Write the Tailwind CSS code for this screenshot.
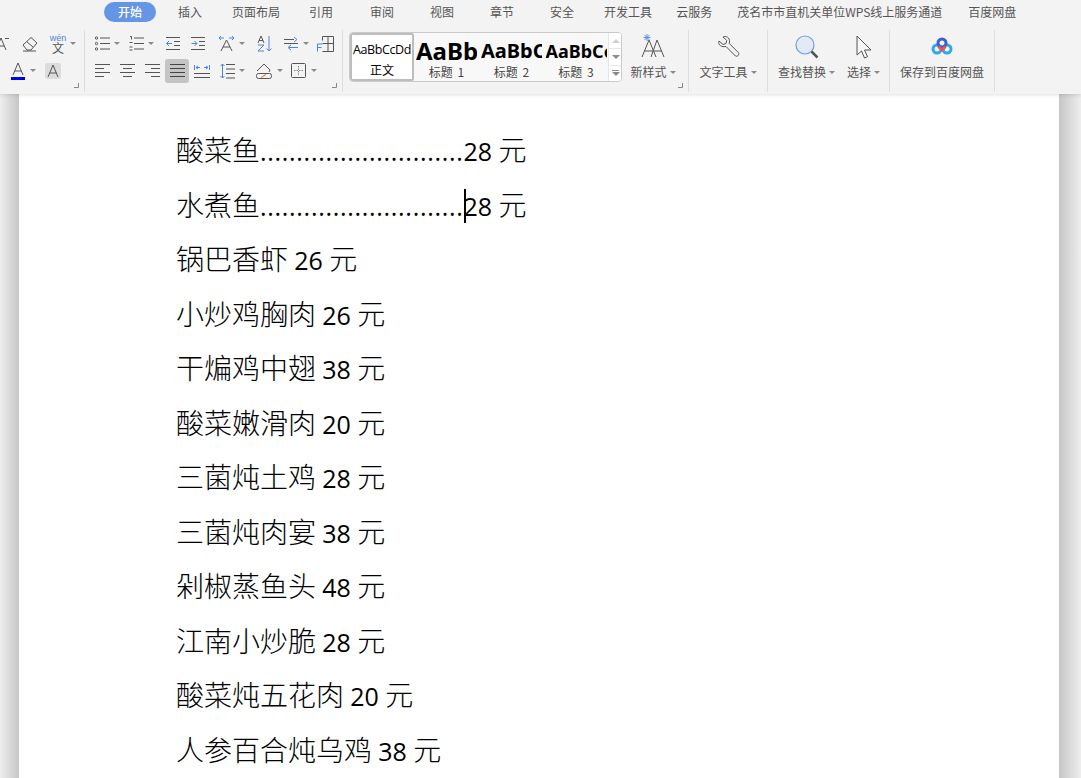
<!DOCTYPE html>
<html lang="zh-CN">
<head>
<meta charset="UTF-8">
<title>WPS 文字</title>
<script src="https://cdn.jsdelivr.net/npm/@tailwindcss/browser@4"></script>
</head>
<body class="h-screen overflow-hidden bg-white font-['Noto_Sans_CJK_SC','Noto_Sans',sans-serif]">
<div class="flex flex-col h-[778px]">

  <!-- ribbon -->
  <header class="relative z-10 h-[94px] shrink-0 bg-[#f3f3f3] shadow-[0_1px_4px_rgba(0,0,0,0.12)] overflow-hidden">
    <nav class="flex items-center h-[22px] pt-[1px] pl-[104px] text-[12px] text-[#555] whitespace-nowrap">
      <span class="w-[52px] h-[20px] leading-[20px] rounded-full bg-[#6495e6] text-white text-center font-medium">开始</span>
      <span class="ml-[22px]">插入</span>
      <span class="ml-[30px]">页面布局</span>
      <span class="ml-[29px]">引用</span>
      <span class="ml-[37px]">审阅</span>
      <span class="ml-[36px]">视图</span>
      <span class="ml-[36px]">章节</span>
      <span class="ml-[36px]">安全</span>
      <span class="ml-[30px]">开发工具</span>
      <span class="ml-[24px]">云服务</span>
      <span class="ml-[25px]">茂名市市直机关单位WPS线上服务通道</span>
      <span class="ml-[26px]">百度网盘</span>
    </nav>

    <div class="flex h-[62px] mt-[8px] text-[#555]">
      <!-- font group -->
      <section class="relative w-[85px] border-r border-[#dedede] overflow-hidden">
        <div class="flex items-center h-[27px]">
          <svg class="w-[12px] h-[16px] -ml-[3px]" viewBox="0 0 12 16" fill="none" stroke="#555"><path d="M-1 14 4 2l5 12M1 10h6M8 2.500h4"/></svg>
          <svg class="w-[16px] h-[16px] ml-[13px]" viewBox="0 0 16 16" fill="none" stroke="#555"><path d="M1 9 9 1.500 15 7l-6 7H5ZM4.500 5.500 11 11M1 15h13"/></svg>
          <span class="ml-[12px] w-[16px] flex flex-col items-center leading-none">
            <span class="text-[9px] leading-[9px] text-[#4a86d8] font-['Liberation_Sans',sans-serif]">wén</span>
            <span class="text-[12px] leading-[10px] text-[#555]">文</span>
          </span>
          <i class="ml-[4px] border-x-[3px] border-t-[3px] border-x-transparent border-t-[#8a8a8a]"></i>
        </div>
        <div class="flex items-center h-[27px]">
          <svg class="w-[14px] h-[18px] ml-[11px]" viewBox="0 0 14 18" fill="none"><path d="M2 13 7 1l5 12M3.500 9h7" stroke="#555"/><rect y="15" width="14" height="3" fill="#0000e6"/></svg>
          <i class="ml-[5px] border-x-[3px] border-t-[3px] border-x-transparent border-t-[#8a8a8a]"></i>
          <span class="ml-[9px] w-[16px] h-[16px] rounded-[2px] bg-[#dcdcdc] flex items-center justify-center">
            <svg class="w-[12px] h-[14px]" viewBox="0 0 12 14" fill="none" stroke="#555"><path d="M1 13 6 1l5 12M2.500 9h7"/></svg>
          </span>
        </div>
        <svg class="absolute right-[5px] bottom-[4px] w-[5px] h-[5px]" viewBox="0 0 5 5" fill="none" stroke="#888"><path d="M4.500 0v4.500H0"/></svg>
      </section>

      <!-- paragraph group -->
      <section class="relative w-[258px] border-r border-[#dedede]">
        <div class="flex items-center h-[27px] pl-[10px]">
          <svg class="w-[15px] h-[15px]" viewBox="0 0 15 15" fill="none" stroke="#555"><circle cx="1.500" cy="2" r="1.200"/><circle cx="1.500" cy="7.500" r="1.200"/><circle cx="1.500" cy="13" r="1.200"/><path d="M5 2h10M5 7.500h10M5 13h10"/></svg>
          <i class="ml-[4px] border-x-[3px] border-t-[3px] border-x-transparent border-t-[#8a8a8a]"></i>
          <svg class="ml-[9px] w-[15px] h-[15px]" viewBox="0 0 15 15" fill="none" stroke="#555"><path d="M1 .500h1.500v3M.500 6.500h3M.500 11h3M.500 14h3M5 2h10M5 7.500h10M5 13h10"/></svg>
          <i class="ml-[4px] border-x-[3px] border-t-[3px] border-x-transparent border-t-[#8a8a8a]"></i>
          <svg class="ml-[12px] w-[15px] h-[13px]" viewBox="0 0 15 13" fill="none"><path d="M0 .500h14M8 4.500h6M8 8.500h6M0 12.500h14" stroke="#555"/><path d="M6 6.500H.500M3 4 .500 6.500 3 9" stroke="#4a86d8"/></svg>
          <svg class="ml-[10px] w-[15px] h-[13px]" viewBox="0 0 15 13" fill="none"><path d="M0 .500h14M8 4.500h6M8 8.500h6M0 12.500h14" stroke="#555"/><path d="M.500 6.500H6M3.500 4 6 6.500 3.500 9" stroke="#4a86d8"/></svg>
          <svg class="ml-[12px] w-[17px] h-[17px]" viewBox="0 0 17 17" fill="none"><path d="M3 16 8.500 5 14 16M5 12h7" stroke="#555"/><path d="M1 3h5M3 1 1 3l2 2M16 3h-5M14 1l2 2-2 2" stroke="#4a86d8"/></svg>
          <i class="ml-[4px] border-x-[3px] border-t-[3px] border-x-transparent border-t-[#8a8a8a]"></i>
          <svg class="ml-[12px] w-[15px] h-[17px]" viewBox="0 0 15 17" fill="none"><path d="M1 8 4 1l3 7M2 5.500h4" stroke="#555"/><path d="M1 10h6l-6 6h6" stroke="#4a86d8"/><path d="M12 1v15M9.500 13.500 12 16l2.500-2.500" stroke="#4a86d8"/></svg>
          <svg class="ml-[12px] w-[15px] h-[15px]" viewBox="0 0 15 15" fill="none"><path d="M0 3.500h10M0 7.500h14M9 11.500h5" stroke="#555"/><path d="M10 1l3 2.500L10 6M14 11.500H5M7 9l-3 2.500L7 14" stroke="#4a86d8"/></svg>
          <i class="ml-[4px] border-x-[3px] border-t-[3px] border-x-transparent border-t-[#8a8a8a]"></i>
          <svg class="ml-[8px] w-[17px] h-[16px]" viewBox="0 0 17 16" fill="none"><path d="M5.500.500h11v15h-11M5.500.500v4M11 .500v15M5.500 7.500h11" stroke="#555"/><path d="M.500 8h5M.500 8v7.500M.500 11.500h4" stroke="#4a86d8"/></svg>
        </div>
        <div class="flex items-center h-[27px] pl-[10px]">
          <svg class="w-[15px] h-[13px]" viewBox="0 0 15 13" fill="none" stroke="#555"><path d="M0 .500h15M0 4.500h9M0 8.500h15M0 12.500h9"/></svg>
          <svg class="ml-[10px] w-[15px] h-[13px]" viewBox="0 0 15 13" fill="none" stroke="#555"><path d="M0 .500h15M3 4.500h9M0 8.500h15M3 12.500h9"/></svg>
          <svg class="ml-[10px] w-[15px] h-[13px]" viewBox="0 0 15 13" fill="none" stroke="#555"><path d="M0 .500h15M6 4.500h9M0 8.500h15M6 12.500h9"/></svg>
          <span class="ml-[5px] w-[24px] h-[24px] rounded-[3px] bg-[#c4c4c4] flex items-center justify-center">
            <svg class="w-[15px] h-[13px]" viewBox="0 0 15 13" fill="none" stroke="#444"><path d="M0 .500h15M0 4.500h15M0 8.500h15M0 12.500h15"/></svg>
          </span>
          <svg class="ml-[5px] w-[16px] h-[14px]" viewBox="0 0 16 14" fill="none"><path d="M0 9.500h16M0 13.500h16" stroke="#555"/><path d="M.500 1v5M15.500 1v5M2 3.500h4M4 2 2 3.500 4 5M10 3.500h4M12 2l2 1.500L12 5" stroke="#4a86d8"/></svg>
          <svg class="ml-[10px] w-[15px] h-[16px]" viewBox="0 0 15 16" fill="none"><path d="M6 1.500h9M6 6h9M6 10.500h9M6 15h9" stroke="#555"/><path d="M2.500 1v14M.500 3l2-2 2 2M.500 13l2 2 2-2" stroke="#4a86d8"/></svg>
          <i class="ml-[4px] border-x-[3px] border-t-[3px] border-x-transparent border-t-[#8a8a8a]"></i>
          <svg class="ml-[11px] w-[16px] h-[16px]" viewBox="0 0 16 16" fill="none"><path d="M1 8 8 1l6 6-1 2" stroke="#555"/><rect x=".500" y="10.500" width="15" height="5" rx="2" stroke="#555"/><path d="M5 14.500 10 11.500" stroke="#e05a4a"/></svg>
          <i class="ml-[5px] border-x-[3px] border-t-[3px] border-x-transparent border-t-[#8a8a8a]"></i>
          <svg class="ml-[8px] w-[15px] h-[15px]" viewBox="0 0 15 15" fill="none"><rect x=".500" y=".500" width="14" height="14" rx="1" stroke="#555"/><path d="M7.500 3v9M3 7.500h9" stroke="#888" stroke-dasharray="1.500 1"/></svg>
          <i class="ml-[5px] border-x-[3px] border-t-[3px] border-x-transparent border-t-[#8a8a8a]"></i>
        </div>
        <svg class="absolute right-[5px] bottom-[4px] w-[5px] h-[5px]" viewBox="0 0 5 5" fill="none" stroke="#888"><path d="M4.500 0v4.500H0"/></svg>
      </section>

      <!-- style gallery -->
      <section class="relative flex w-[346px] border-r border-[#dedede] pl-[6px]">
        <div class="flex w-[273px] h-[50px] mt-[2px] rounded-[4px] border border-[#cacaca] bg-[#f8f8f8] overflow-hidden">
          <div class="w-[64px] shrink-0 rounded-[2px] border-2 border-[#bdbdbd] bg-white flex flex-col items-center">
            <span class="h-[27px] leading-[29px] text-[12.500px] text-black font-['Open_Sans',sans-serif] tracking-[-0.400px] whitespace-nowrap">AaBbCcDd</span>
            <span class="text-[12px] leading-[16px] text-black">正文</span>
          </div>
          <div class="w-[65px] shrink-0 flex flex-col items-center overflow-hidden">
            <span class="w-[61px] h-[32px] leading-[36px] overflow-hidden text-[24px] font-bold text-black font-['Noto_Sans',sans-serif] whitespace-nowrap">AaBbCc</span>
            <span class="text-[12px] leading-[14px] text-[#444] [word-spacing:2px]">标题 1</span>
          </div>
          <div class="w-[65px] shrink-0 flex flex-col items-center overflow-hidden">
            <span class="w-[61px] h-[32px] leading-[36px] overflow-hidden text-[20px] font-bold text-black font-['Noto_Sans',sans-serif] whitespace-nowrap">AaBbCc</span>
            <span class="text-[12px] leading-[14px] text-[#444] [word-spacing:2px]">标题 2</span>
          </div>
          <div class="w-[64px] shrink-0 flex flex-col items-center overflow-hidden">
            <span class="w-[61px] h-[32px] leading-[36px] overflow-hidden text-[18px] font-bold text-black font-['Noto_Sans',sans-serif] whitespace-nowrap">AaBbCc</span>
            <span class="text-[12px] leading-[14px] text-[#444] [word-spacing:2px]">标题 3</span>
          </div>
          <div class="w-[14px] shrink-0 flex flex-col items-center border-l border-[#e6e6e6] bg-white">
            <span class="flex-1 flex items-center"><i class="border-x-[4px] border-b-[4px] border-x-transparent border-b-[#cfcfcf]"></i></span>
            <span class="flex-1 w-full flex items-center justify-center border-y border-[#e6e6e6]"><i class="border-x-[4px] border-t-[4px] border-x-transparent border-t-[#8a8a8a]"></i></span>
            <span class="flex-1 flex flex-col items-center justify-center gap-[1px]"><i class="w-[7px] border-t border-[#8a8a8a]"></i><i class="border-x-[4px] border-t-[4px] border-x-transparent border-t-[#8a8a8a]"></i></span>
          </div>
        </div>
        <div class="w-[60px] flex flex-col items-center ml-[1px]">
          <svg class="w-[26px] h-[26px] mt-[3px]" viewBox="0 0 26 26" fill="none"><path d="M2 24 9 7l7 17M4.500 18h9M11 24l6-17 7 17M14 18h8" stroke="#555"/><path d="M7 1v7M3.500 4.500h7M4.500 2l5 5M9.500 2l-5 5" stroke="#5b93e0"/></svg>
          <span class="flex items-center text-[12px] leading-[16px] mt-[5px]">新样式<i class="ml-[3px] border-x-[3px] border-t-[3px] border-x-transparent border-t-[#8a8a8a]"></i></span>
        </div>
        <svg class="absolute right-[5px] bottom-[4px] w-[5px] h-[5px]" viewBox="0 0 5 5" fill="none" stroke="#888"><path d="M4.500 0v4.500H0"/></svg>
      </section>

      <!-- text tools -->
      <section class="w-[79px] border-r border-[#dedede] flex flex-col items-center">
        <svg class="w-[24px] h-[24px] mt-[5px]" viewBox="0 0 24 24" fill="none" stroke="#555"><path d="M3 6 7 9.500l3-1 .8-3L7 2c3-1.500 7 .5 6.500 5l-.2 1.500 9 9c1.300 1.300-.2 4.800-2.800 3.500l-9.500-9.500C6 12.500 1.500 10 3 6Z"/></svg>
        <span class="flex items-center text-[12px] leading-[16px] mt-[5px]">文字工具<i class="ml-[3px] border-x-[3px] border-t-[3px] border-x-transparent border-t-[#8a8a8a]"></i></span>
      </section>

      <!-- find and select -->
      <section class="w-[122px] border-r border-[#dedede] flex pl-[10px]">
        <div class="flex flex-col items-center">
          <svg class="w-[24px] h-[24px] mt-[5px]" viewBox="0 0 24 24" fill="none"><circle cx="10" cy="10" r="9" fill="#e3eaf6" stroke="#6f9fe2" stroke-width="1.200"/><path d="m16.500 16.500 6 6" stroke="#555" stroke-width="2.500"/></svg>
          <span class="flex items-center text-[12px] leading-[16px] mt-[5px]">查找替换<i class="ml-[3px] border-x-[3px] border-t-[3px] border-x-transparent border-t-[#8a8a8a]"></i></span>
        </div>
        <div class="flex flex-col items-center ml-[12px]">
          <svg class="w-[18px] h-[24px] mt-[5px]" viewBox="0 0 18 24" fill="#f7f7f7" stroke="#555"><path d="M2 1v19l4.500-4 3 7 3-1.300-3-6.700H16Z"/></svg>
          <span class="flex items-center text-[12px] leading-[16px] mt-[5px]">选择<i class="ml-[3px] border-x-[3px] border-t-[3px] border-x-transparent border-t-[#8a8a8a]"></i></span>
        </div>
      </section>

      <!-- baidu -->
      <section class="w-[105px] border-r border-[#dedede] flex flex-col items-center">
        <svg class="w-[22px] h-[18px] mt-[7px]" viewBox="0 0 22 18" fill="none" stroke-width="3"><circle cx="6" cy="12" r="4" stroke="#2fa8e8"/><circle cx="16" cy="12" r="4" stroke="#2fa8e8"/><circle cx="11" cy="6" r="4" stroke="#3f5fd0"/><path d="M7.500 9.500 11 13l3.500-3.500" stroke="#e8506a"/></svg>
        <span class="text-[12px] leading-[16px] mt-[9px]">保存到百度网盘</span>
      </section>
    </div>
  </header>

  <!-- document area -->
  <main class="flex flex-1 min-h-0">
    <div class="w-[19px] shrink-0 bg-linear-to-r from-[#eeeeee] to-[#c6c6c6]"></div>
    <article class="w-[1040px] shrink-0 bg-white pt-[28px] pl-[157px] text-[28px] text-black font-light whitespace-nowrap overflow-hidden [&>p]:h-[54.500px] [&>p]:leading-[54.500px] [&_span]:font-['Open_Sans',sans-serif] [&_span]:text-[25px] [&_span]:font-normal">
      <p>酸菜鱼<span class="tracking-[0.700px]">............................</span><span>28 </span>元</p>
      <p class="relative">水煮鱼<span class="tracking-[0.700px]">............................</span><span>28 </span>元<i class="absolute left-[288px] top-[12px] w-[2px] h-[34px] bg-black"></i></p>
      <p>锅巴香虾 <span>26 </span>元</p>
      <p>小炒鸡胸肉 <span>26 </span>元</p>
      <p>干煸鸡中翅 <span>38 </span>元</p>
      <p>酸菜嫩滑肉 <span>20 </span>元</p>
      <p>三菌炖土鸡 <span>28 </span>元</p>
      <p>三菌炖肉宴 <span>38 </span>元</p>
      <p>剁椒蒸鱼头 <span>48 </span>元</p>
      <p>江南小炒脆 <span>28 </span>元</p>
      <p>酸菜炖五花肉 <span>20 </span>元</p>
      <p>人参百合炖乌鸡 <span>38 </span>元</p>
    </article>
    <div class="w-[22px] shrink-0 bg-linear-to-l from-[#eeeeee] to-[#c6c6c6]"></div>
  </main>
</div>
</body>
</html>
